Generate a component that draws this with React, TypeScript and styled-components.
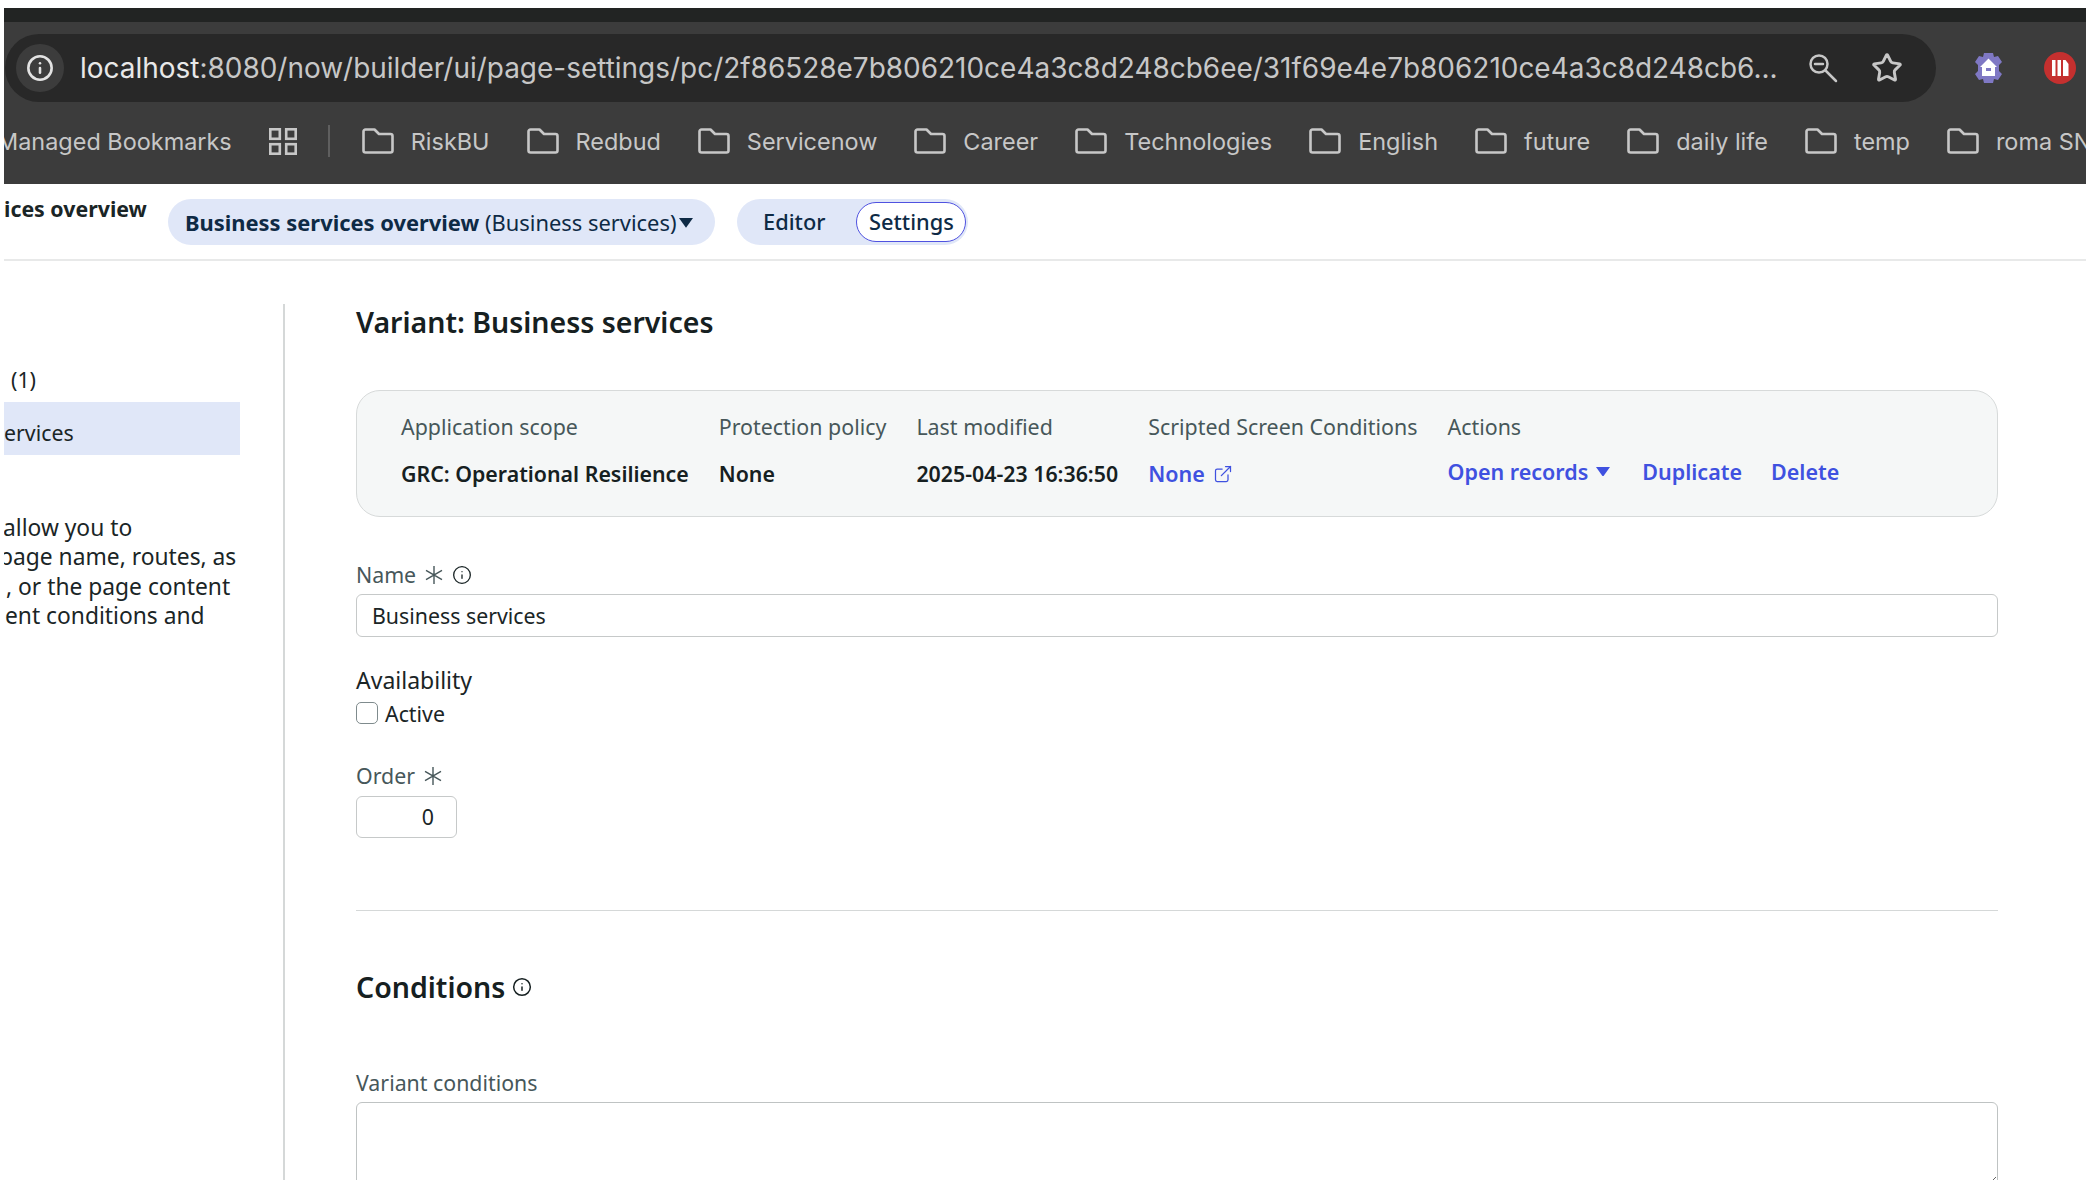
import React from 'react';
import styled, { createGlobalStyle } from 'styled-components';
import { Info, Star, ExternalLink } from 'lucide-react';

const GlobalStyle = createGlobalStyle`
html, body {
  margin: 0;
  padding: 0;
  background: #fff;
  overflow: hidden;
}
* { box-sizing: border-box; }
`

const Page = styled.div`
width: 2092px;
height: 1180px;
overflow: hidden;
padding: 8px 6px 0 4px;
background: #fff;
font-family: "Noto Sans", "Open Sans", sans-serif;
font-size: 21.33px;
line-height: 29px;
color: #1a2526;
`

const TitleStrip = styled.div`
height: 14px;
background: #222423;
`

const ChromeBar = styled.div`
height: 162px;
background: #3c3c3c;
padding-top: 12px;
overflow: hidden;
font-family: Inter, Roboto, sans-serif;
color: #c7c7c7;
`

const AddressRow = styled.div`
display: flex;
align-items: center;
height: 68px;
padding-left: 1px;
`

const Omnibox = styled.div`
display: flex;
align-items: center;
width: 1931px;
height: 68px;
padding-left: 11px;
background: #282828;
border-radius: 34px;
`

const SiteInfo = styled.div`
display: flex;
align-items: center;
justify-content: center;
width: 48px;
height: 48px;
border-radius: 50%;
background: #3c3c3c;
color: #e3e3e3;
`

const Url = styled.div`
flex: none;
margin-left: 16px;
width: 1704px;
font-size: 27.96px;
white-space: nowrap;
color: #c7c7c7;
b {
  font-weight: 400;
  color: #e8e8e8;
}
`

const OmniIcons = styled.div`
display: flex;
align-items: center;
gap: 33px;
margin-left: 24px;
color: #c7c7c7;
`

const Extensions = styled.div`
display: flex;
align-items: center;
gap: 39px;
margin-left: 36px;
`

const BookmarkRow = styled.div`
display: flex;
align-items: center;
gap: 37px;
height: 78px;
margin-left: -7px;
white-space: nowrap;
font-size: 23.45px;
`

const Bookmark = styled.div`
display: flex;
align-items: center;
gap: 17px;
flex: none;
`

const BookmarkDivider = styled.div`
flex: none;
width: 2px;
height: 32px;
margin: 0 -5px 0 -6px;
background: #5f5f5f;
`

const Header = styled.div`
display: flex;
align-items: flex-start;
height: 77px;
padding-top: 13px;
border-bottom: 2px solid #e8e9e9;
white-space: nowrap;
`

const PageTitle = styled.div`
font-weight: 700;
width: 143px;
margin: -3px 21px 0 0;
overflow: hidden;
`

const VariantPill = styled.div`
display: flex;
align-items: center;
height: 46px;
width: 547px;
margin-top: 2px;
padding-left: 17px;
border-radius: 23px;
background: #e0e7f8;
color: #0e2a45;
font-size: 21.9px;
b { font-weight: 700; }
svg { margin: 2px 0 0 3px; }
`

const ModeSwitch = styled.div`
display: flex;
align-items: center;
height: 46px;
width: 231px;
margin: 2px 0 0 22px;
border-radius: 23px;
background: #e0e7f8;
color: #0e2a45;
font-size: 21.8px;
font-weight: 500;
`

const ModeTab = styled.div<{ $active?: boolean }>`
display: flex;
align-items: center;
justify-content: center;
height: 40px;
padding-bottom: 2px;
${(p) => p.$active
    ? `width: 110px; margin-left: 31px; background: #fff; border: 1.5px solid #4f52e0; border-radius: 20px;`
    : `margin-left: 26px;`}
`

const Body = styled.div`
display: flex;
padding-top: 43px;
`

const Sidebar = styled.aside`
flex: none;
width: 281px;
height: 900px;
border-right: 2px solid #d5d8d8;
padding-top: 61px;
`

const SideCount = styled.div`
padding-left: 7px;
`

const SideItem = styled.div`
display: flex;
align-items: center;
width: 236px;
height: 53px;
margin-top: 8px;
padding-top: 8px;
background: #e0e7f8;
overflow: hidden;
`

const SideText = styled.div`
margin-top: 58px;
width: 236px;
overflow: hidden;
white-space: nowrap;
font-size: 22.8px;
line-height: 29.3px;
`

const SideLine = styled.div<{ $indent: number }>`
margin-left: ${(p) => p.$indent}px;
`

const Main = styled.main`
flex: none;
width: 1642px;
margin-left: 71px;
`

const Heading = styled.h2`
display: flex;
align-items: center;
gap: 7px;
margin: 0;
font-size: 28.5px;
line-height: 36px;
font-weight: 600;
color: #162021;
`

const MetaCard = styled.div`
display: flex;
gap: 30px;
height: 127px;
margin-top: 50px;
padding: 21px 44px 0;
background: #f5f7f7;
border: 1.5px solid #d7dada;
border-radius: 24px;
`

const MetaColumn = styled.div`
display: flex;
flex-direction: column;
gap: 18px;
white-space: nowrap;
`

const MetaLabel = styled.div`
font-size: 21.4px;
color: #47575a;
`

const MetaValue = styled.div`
font-weight: 600;
color: #162021;
`

const ActionRow = styled.div`
display: flex;
align-items: center;
margin-top: -2px;
`

const ActionLink = styled.a<{ $gap?: number }>`
display: inline-flex;
align-items: center;
gap: 8px;
margin-right: ${(p) => p.$gap ?? 0}px;
font-size: 21.5px;
font-weight: 600;
color: #3f51e0;
`

const Field = styled.div<{ $top: number }>`
margin-top: ${(p) => p.$top}px;
`

const FieldLabel = styled.label`
display: flex;
align-items: center;
gap: 8px;
color: #47575a;
`

const GroupTitle = styled.div`
font-size: 23px;
color: #1a2526;
`

const TextBox = styled.div<{ $short?: boolean }>`
display: flex;
align-items: center;
height: ${(p) => (p.$short ? 42 : 43)}px;
width: ${(p) => (p.$short ? '101px' : '100%')};
margin-top: ${(p) => (p.$short ? 6 : 5)}px;
padding: ${(p) => (p.$short ? '0 22px 2px 0' : '0 0 0 15px')};
justify-content: ${(p) => (p.$short ? 'flex-end' : 'flex-start')};
background: #fff;
border: 1.5px solid #c6c9c9;
border-radius: 6px;
`

const CheckRow = styled.div`
display: flex;
align-items: center;
gap: 7px;
margin-top: 4px;
`

const CheckBox = styled.span`
flex: none;
width: 22px;
height: 22px;
margin-top: -2px;
border: 1.5px solid #7f8b8d;
border-radius: 5px;
background: #fff;
`

const Rule = styled.hr`
margin: 72px 0 0;
border: 0;
border-top: 1.5px solid #d5d8d8;
`

const ConditionsArea = styled.textarea`
display: block;
width: 100%;
height: 84px;
margin-top: 5px;
background: #fff;
border: 1.5px solid #bfc3c3;
border-radius: 6px;
resize: vertical;
outline: none;
`

const Asterisk = () => (
  <svg width="20" height="20" viewBox="0 0 20 20" fill="none" stroke="#47575a" strokeWidth="1.4" style={{ flex: 'none' }}>
    <path d="M10 1v18M2 5.300l16 9.400M18 5.300L2 14.700" />
  </svg>
)

const Caret = ({ size, color }: { size: number; color: string }) => (
  <svg width={size} height={size * 0.7} viewBox="0 0 10 7" fill={color} style={{ flex: 'none' }}>
    <path d="M0 0h10L5 7z" />
  </svg>
)

const Folder = () => (
  <svg width="32" height="26" viewBox="0 0 32 26" fill="none" stroke="#c7c7c7" strokeWidth="2.6" strokeLinejoin="round" style={{ flex: 'none' }}>
    <path d="M1.500 3.500a2 2 0 0 1 2-2h9l4.500 4.500h11.500a2 2 0 0 1 2 2v14.500a2 2 0 0 1-2 2h-25a2 2 0 0 1-2-2z" />
  </svg>
)

const GridIcon = () => (
  <svg width="28" height="27" viewBox="0 0 28 27" fill="none" stroke="#c7c7c7" strokeWidth="2.6" style={{ flex: 'none' }}>
    <rect x="1.300" y="1.300" width="9.500" height="9.500" />
    <rect x="17.200" y="1.300" width="9.500" height="9.500" />
    <rect x="1.300" y="16.200" width="9.500" height="9.500" />
    <rect x="17.200" y="16.200" width="9.500" height="9.500" />
  </svg>
)

const SearchMinus = () => (
  <svg width="30" height="30" viewBox="0 0 30 30" fill="none" stroke="#c7c7c7" strokeWidth="2.5" strokeLinecap="round" style={{ flex: 'none' }}>
    <circle cx="11" cy="11" r="8.500" />
    <path d="M7 11h8M17.500 17.500L28 28" />
  </svg>
)

const HouseExtension = () => (
  <svg width="33" height="32" viewBox="0 0 33 32" style={{ flex: 'none' }}>
    <path fill="#7f78c4" d="M12 1h9l1 4 4-1 4 6-3 3v6l3 3-4 6-4-1-1 4h-9l-1-4-4 1-4-6 3-3v-6l-3-3 4-6 4 1z" />
    <path fill="#fff" d="M16.500 6.500L25 15h-2v9H10v-9H8z" />
    <rect x="14" y="16" width="5" height="3" fill="#7f78c4" />
  </svg>
)

const LibraryExtension = () => (
  <svg width="32" height="32" viewBox="0 0 32 32" style={{ flex: 'none' }}>
    <circle cx="16" cy="16" r="16" fill="#c5302f" />
    <path fill="#fff" d="M8 8h3.500v16H8zM13.500 8H17v16h-3.500zM19 8h2.500l3 4v12H19z" />
  </svg>
)

const bookmarks = ['RiskBU', 'Redbud', 'Servicenow', 'Career', 'Technologies', 'English', 'future', 'daily life', 'temp', 'roma SN']

export default function App() {
  return (
    <Page>
      <GlobalStyle />
      <TitleStrip />
      <ChromeBar>
        <AddressRow>
          <Omnibox>
            <SiteInfo><Info size={28} strokeWidth={2.2} /></SiteInfo>
            <Url><b>localhost</b>:8080/now/builder/ui/page-settings/pc/2f86528e7b806210ce4a3c8d248cb6ee/31f69e4e7b806210ce4a3c8d248cb6...</Url>
            <OmniIcons>
              <SearchMinus />
              <Star size={32} strokeWidth={2.2} />
            </OmniIcons>
          </Omnibox>
          <Extensions>
            <HouseExtension />
            <LibraryExtension />
          </Extensions>
        </AddressRow>
        <BookmarkRow>
          <Bookmark>Managed Bookmarks</Bookmark>
          <GridIcon />
          <BookmarkDivider />
          {bookmarks.map((name) => (
            <Bookmark key={name}><Folder />{name}</Bookmark>
          ))}
        </BookmarkRow>
      </ChromeBar>
      <Header>
        <PageTitle>ices overview</PageTitle>
        <VariantPill>
          <span><b>Business services overview</b> (Business services)</span>
          <Caret size={14} color="#0e2a45" />
        </VariantPill>
        <ModeSwitch>
          <ModeTab>Editor</ModeTab>
          <ModeTab $active>Settings</ModeTab>
        </ModeSwitch>
      </Header>
      <Body>
        <Sidebar>
          <SideCount>(1)</SideCount>
          <SideItem>ervices</SideItem>
          <SideText>
            <SideLine $indent={-1}>allow you to</SideLine>
            <SideLine $indent={-5}>page name, routes, as</SideLine>
            <SideLine $indent={2}>, or the page content</SideLine>
            <SideLine $indent={1}>ent conditions and</SideLine>
          </SideText>
        </Sidebar>
        <Main>
          <Heading>Variant: Business services</Heading>
          <MetaCard>
            <MetaColumn>
              <MetaLabel>Application scope</MetaLabel>
              <MetaValue>GRC: Operational Resilience</MetaValue>
            </MetaColumn>
            <MetaColumn>
              <MetaLabel>Protection policy</MetaLabel>
              <MetaValue>None</MetaValue>
            </MetaColumn>
            <MetaColumn>
              <MetaLabel>Last modified</MetaLabel>
              <MetaValue>2025-04-23 16:36:50</MetaValue>
            </MetaColumn>
            <MetaColumn>
              <MetaLabel>Scripted Screen Conditions</MetaLabel>
              <ActionLink>None <ExternalLink size={20} strokeWidth={1.5} /></ActionLink>
            </MetaColumn>
            <MetaColumn>
              <MetaLabel>Actions</MetaLabel>
              <ActionRow>
                <ActionLink $gap={32}>Open records <Caret size={14} color="#3f51e0" /></ActionLink>
                <ActionLink $gap={29}>Duplicate</ActionLink>
                <ActionLink>Delete</ActionLink>
              </ActionRow>
            </MetaColumn>
          </MetaCard>
          <Field $top={43}>
            <FieldLabel>Name <Asterisk /><Info size={20} strokeWidth={1.6} color="#1a2526" /></FieldLabel>
            <TextBox>Business services</TextBox>
          </Field>
          <Field $top={29}>
            <GroupTitle>Availability</GroupTitle>
            <CheckRow><CheckBox />Active</CheckRow>
          </Field>
          <Field $top={33}>
            <FieldLabel>Order <Asterisk /></FieldLabel>
            <TextBox $short>0</TextBox>
          </Field>
          <Rule />
          <Field $top={58}>
            <Heading>Conditions <Info size={20} strokeWidth={1.8} color="#162021" /></Heading>
          </Field>
          <Field $top={63}>
            <FieldLabel>Variant conditions</FieldLabel>
            <ConditionsArea />
          </Field>
        </Main>
      </Body>
    </Page>
  )
}
